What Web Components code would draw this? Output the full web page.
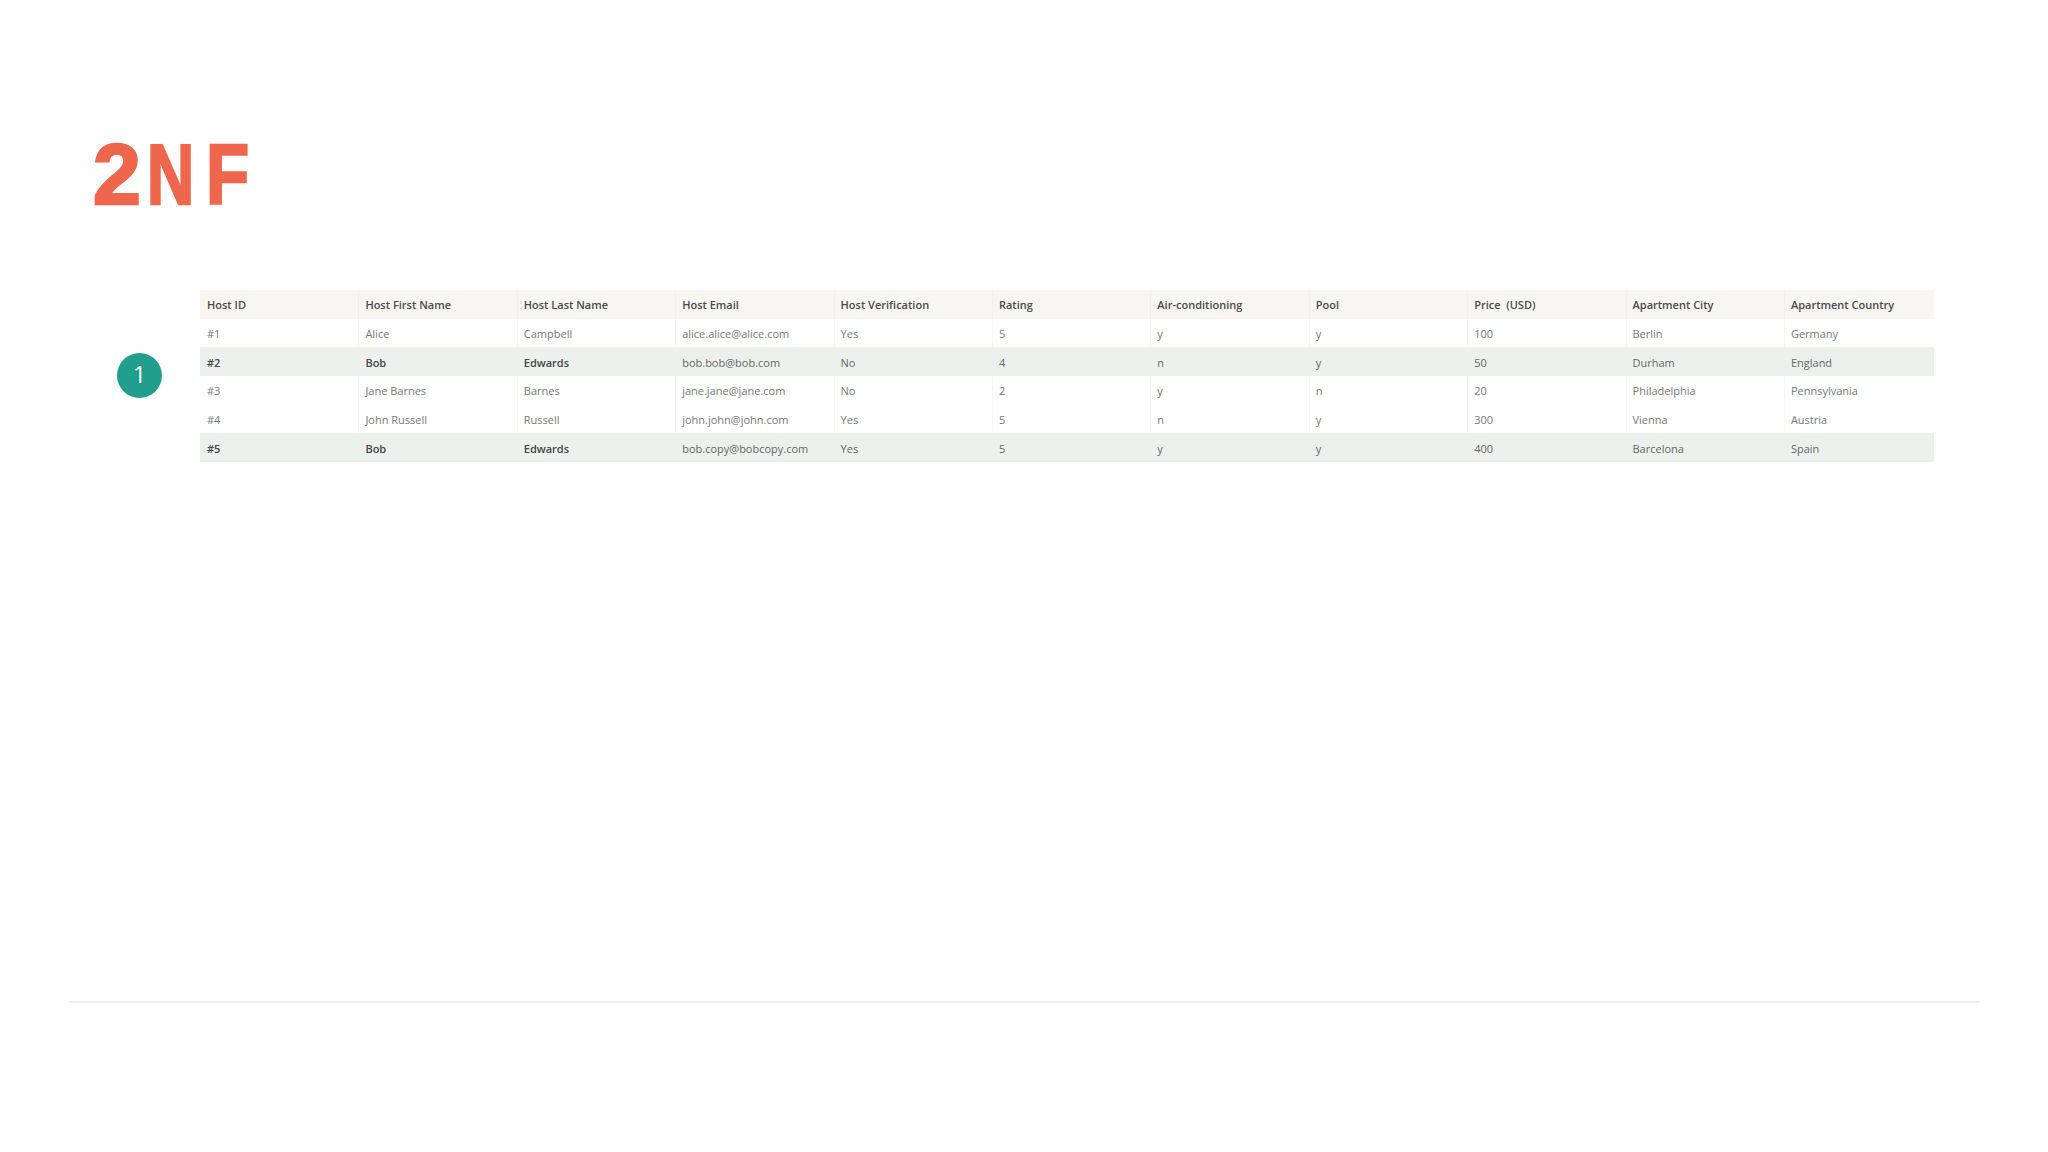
<!DOCTYPE html>
<html lang="en">
<head>
    <meta charset="UTF-8">
    <title>2NF</title>
    <style>
        body { margin: 0; background: #fff; }
    </style>
</head>
<body>
    <slide-page>
        <brand-mark slot="title"></brand-mark>
        <step-badge slot="badge">1</step-badge>
        <host-table slot="content"></host-table>
    </slide-page>

    <template id="slide-template">
        <style>
            :host { display: flex; flex-direction: column; width: 2048px; height: 1152px; background: #fff; font-family: "Open Sans", "Noto Sans", sans-serif; }
            .head { height: 290px; padding: 142px 0 0 93px; box-sizing: border-box; }
            .body { display: flex; align-items: center; gap: 38px; padding-left: 117px; }
            .rule { height: 2px; margin: 539px 68px 0 69px; background: #efefef; }
        </style>
        <div class="head"><slot name="title"></slot></div>
        <div class="body">
            <slot name="badge"></slot>
            <slot name="content"></slot>
        </div>
        <div class="rule"></div>
    </template>

    <template id="brand-template">
        <style>
            :host { display: flex; height: 64px; color: #ee674d; font: 700 86px/64px "Liberation Sans", sans-serif; -webkit-text-stroke: 2.6px #ee674d; }
            span { display: block; transform-origin: 0 50%; }
            .two { width: 54px; transform: scaleX(1); }
            .en { width: 59px; transform: scaleX(.76); }
            .ef { transform: scaleX(.82); }
        </style>
        <span class="two">2</span><span class="en">N</span><span class="ef">F</span>
    </template>

    <template id="badge-template">
        <style>
            :host { display: flex; align-items: center; justify-content: center; flex: none; width: 45px; height: 45px; padding-bottom: 2px; box-sizing: border-box; border-radius: 50%; background: #219e8e; color: #fff; font: 400 23px/1 "Open Sans", sans-serif; }
        </style>
        <slot></slot>
    </template>

    <template id="table-template">
        <style>
            :host { display: block; width: 1734px; font: 400 11px/1 "Open Sans", sans-serif; color: #777; }
            .row { display: grid; grid-template-columns: repeat(10, 158.4px) 150px; height: 28.67px; }
            .cell { display: flex; align-items: center; padding: 1px 0 0 6px; border-left: 1px solid #f6f6f4; box-sizing: border-box; white-space: pre; }
            .cell:first-child { border-left: 0; padding-left: 7px; }
            .header { background: #f7f6f3; color: #4b4b4b; font-weight: 600; }
            .header .cell { border-left-color: #f1f0ed; padding-top: 0; }
            .mark { background: #edf1ed; color: #666; }
            .mark .cell { border-left: 0; padding-left: 7px; }
            .mark .key { color: #454545; font-weight: 600; }
        </style>
        <div id="rows"></div>
    </template>

    <script>
        class SlidePage extends HTMLElement {
            connectedCallback() {
                this.attachShadow({ mode: 'open' })
                this.shadowRoot.append(document.querySelector('#slide-template').content.cloneNode(true))
            }
        }

        class BrandMark extends HTMLElement {
            connectedCallback() {
                this.attachShadow({ mode: 'open' })
                this.shadowRoot.append(document.querySelector('#brand-template').content.cloneNode(true))
            }
        }

        class StepBadge extends HTMLElement {
            connectedCallback() {
                this.attachShadow({ mode: 'open' })
                this.shadowRoot.append(document.querySelector('#badge-template').content.cloneNode(true))
            }
        }

        // rows with mark = the duplicated host, first three columns go bold
        const columns = ['Host ID', 'Host First Name', 'Host Last Name', 'Host Email', 'Host Verification', 'Rating', 'Air-conditioning', 'Pool', 'Price  (USD)', 'Apartment City', 'Apartment Country']
        const hosts = [
            { cells: ['#1', 'Alice', 'Campbell', 'alice.alice@alice.com', 'Yes', '5', 'y', 'y', '100', 'Berlin', 'Germany'] },
            { mark: true, cells: ['#2', 'Bob', 'Edwards', 'bob.bob@bob.com', 'No', '4', 'n', 'y', '50', 'Durham', 'England'] },
            { cells: ['#3', 'Jane Barnes', 'Barnes', 'jane.jane@jane.com', 'No', '2', 'y', 'n', '20', 'Philadelphia', 'Pennsylvania'] },
            { cells: ['#4', 'John Russell', 'Russell', 'john.john@john.com', 'Yes', '5', 'n', 'y', '300', 'Vienna', 'Austria'] },
            { mark: true, cells: ['#5', 'Bob', 'Edwards', 'bob.copy@bobcopy.com', 'Yes', '5', 'y', 'y', '400', 'Barcelona', 'Spain'] }
        ]

        class HostTable extends HTMLElement {
            connectedCallback() {
                this.attachShadow({ mode: 'open' })
                this.shadowRoot.append(document.querySelector('#table-template').content.cloneNode(true))
                let rows = this.shadowRoot.querySelector('#rows')
                rows.append(this.makeRow(columns, 'header'))
                hosts.forEach(h => rows.append(this.makeRow(h.cells, h.mark ? 'mark' : '')))
            }

            makeRow(texts, kind) {
                let row = document.createElement('div')
                row.className = 'row ' + kind
                texts.forEach((t, i) => {
                    let cell = document.createElement('div')
                    cell.className = i < 3 ? 'cell key' : 'cell'
                    cell.textContent = t
                    row.append(cell)
                })
                return row
            }
        }

        customElements.define('slide-page', SlidePage)
        customElements.define('brand-mark', BrandMark)
        customElements.define('step-badge', StepBadge)
        customElements.define('host-table', HostTable)
    </script>
</body>
</html>
